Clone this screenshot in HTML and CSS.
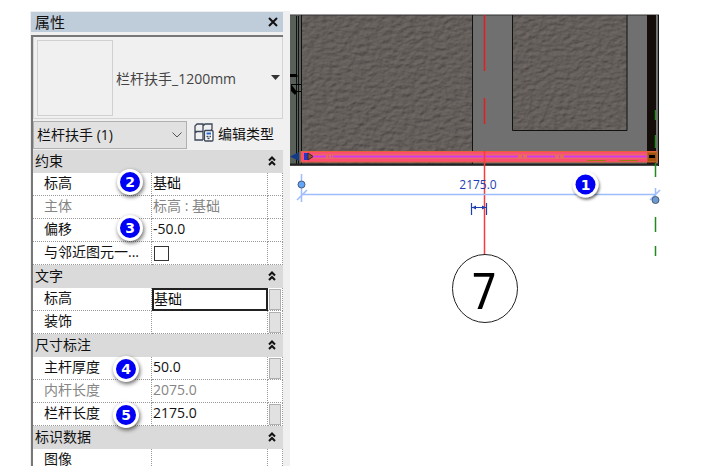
FILE: index.html
```html
<!DOCTYPE html>
<html lang="zh-CN">
<head>
  <meta charset="UTF-8">
  <title>属性</title>
  <link rel="stylesheet" href="styles.css">
</head>
<body>
  <div class="workspace">

    <!-- Properties palette -->
    <aside class="palette">
      <header class="palette-title">
        <h2>属性</h2>
        <button class="close" aria-label="关闭">
          <svg width="10" height="10" viewBox="0 0 10 10"><path d="M1 1 L9 9 M9 1 L1 9" stroke="#111" stroke-width="2"/></svg>
        </button>
      </header>

      <div class="palette-body">
        <button class="type-selector">
          <span class="thumb"></span>
          <span class="type-name">栏杆扶手_1200mm</span>
          <svg class="caret" width="9" height="5" viewBox="0 0 9 5"><path d="M0 0 H9 L4.5 5 Z" fill="#333"/></svg>
        </button>

        <div class="filter-row">
          <select class="filter" aria-label="图元">
            <option>栏杆扶手 (1)</option>
          </select>
          <button class="edit-type">
            <svg width="20" height="19" viewBox="0 0 20 19" fill="none" stroke="#3b4658" stroke-width="1.3">
              <path d="M3 1 H9 V8.500 H1 V3 Z M9 3 L11 1 H18 V6 L17 7.500 M1 8.500 V17 H9 M9 8.500 V17 M1 10 L3 8.500"/>
              <rect x="10.500" y="7.500" width="8.500" height="10.500" rx="1" fill="#fff"/>
              <path d="M12.500 10.500 H17" stroke="#1f63d0" stroke-width="2"/>
              <path d="M12.500 13.500 H17 M13.500 15.500 H16" stroke-dasharray="2 1"/>
            </svg>
            编辑类型
          </button>
        </div>

        <table class="props">
          <colgroup><col class="col-name"><col><col class="col-btn"></colgroup>
          <tbody>
            <tr class="group"><th colspan="3">约束<button class="fold" aria-label="折叠"><svg width="8" height="10" viewBox="0 0 8 10"><path d="M1 4.500 L4 1.500 L7 4.500 M1 9 L4 6 L7 9"/></svg></button></th></tr>
            <tr><th>标高<span class="badge">2</span></th><td>基础</td><td></td></tr>
            <tr class="readonly"><th>主体</th><td>标高 : 基础</td><td></td></tr>
            <tr><th>偏移<span class="badge">3</span></th><td>-50.0</td><td></td></tr>
            <tr><th><label for="attach">与邻近图元一...</label></th><td><input type="checkbox" id="attach"></td><td></td></tr>
          </tbody>
          <tbody>
            <tr class="group"><th colspan="3">文字<button class="fold" aria-label="折叠"><svg width="8" height="10" viewBox="0 0 8 10"><path d="M1 4.500 L4 1.500 L7 4.500 M1 9 L4 6 L7 9"/></svg></button></th></tr>
            <tr><th><label for="level">标高</label></th><td class="editing"><input type="text" id="level" value="基础"></td><td><button class="assoc" aria-label="关联"></button></td></tr>
            <tr><th>装饰</th><td></td><td><button class="assoc" aria-label="关联"></button></td></tr>
          </tbody>
          <tbody class="dims">
            <tr class="group"><th colspan="3">尺寸标注<button class="fold" aria-label="折叠"><svg width="8" height="10" viewBox="0 0 8 10"><path d="M1 4.500 L4 1.500 L7 4.500 M1 9 L4 6 L7 9"/></svg></button></th></tr>
            <tr><th>主杆厚度<span class="badge">4</span></th><td>50.0</td><td><button class="assoc" aria-label="关联"></button></td></tr>
            <tr class="readonly"><th>内杆长度</th><td>2075.0</td><td></td></tr>
            <tr><th>栏杆长度<span class="badge">5</span></th><td>2175.0</td><td><button class="assoc" aria-label="关联"></button></td></tr>
          </tbody>
          <tbody>
            <tr class="group"><th colspan="3">标识数据<button class="fold" aria-label="折叠"><svg width="8" height="10" viewBox="0 0 8 10"><path d="M1 4.500 L4 1.500 L7 4.500 M1 9 L4 6 L7 9"/></svg></button></th></tr>
            <tr><th>图像</th><td></td><td></td></tr>
          </tbody>
        </table>
      </div>
    </aside>

    <!-- Plan view -->
    <main class="view">
      <svg class="plan" viewBox="290 11 423 454">
        <defs>
          <filter id="leather" x="0" y="0" width="100%" height="100%" color-interpolation-filters="sRGB">
            <feTurbulence type="fractalNoise" baseFrequency="0.16 0.24" numOctaves="4" seed="7" result="noise"/>
            <feDiffuseLighting in="noise" surfaceScale="0.9" diffuseConstant="1.1" lighting-color="#67615e">
              <feDistantLight azimuth="235" elevation="62"/>
            </feDiffuseLighting>
          </filter>
          <filter id="shadow" x="-30%" y="-30%" width="170%" height="170%">
            <feDropShadow dx="1" dy="2" stdDeviation="1.5" flood-color="#000" flood-opacity="0.6"/>
          </filter>
        </defs>

        <!-- slab and floor finish -->
        <rect x="290" y="15" width="369" height="151" fill="#707070"/>
        <rect x="302" y="15" width="171" height="150" filter="url(#leather)"/>
        <rect x="513" y="15" width="114" height="116" filter="url(#leather)"/>
        <path d="M290 15 H659" stroke="#333" fill="none"/>
        <path d="M472.500 15 V165 M512.500 15 V130.500 H627 V15" stroke="#111" fill="none"/>

        <!-- left wall -->
        <rect x="290" y="16" width="11" height="149" fill="#59605a"/>
        <path d="M296.500 16 V165 M298.500 16 V165 M301.500 15 V165" stroke="#111" fill="none"/>
        <path d="M290 76 H298 M291 84.500 H301 M296 91.500 H301" stroke="#000" fill="none"/>
        <path d="M291 84 L297 92 L295 95 L291 91 Z M290 74 H297 V77 H290 Z"/>

        <!-- right wall -->
        <rect x="647" y="15" width="9" height="150" fill="#150d09"/>
        <path d="M656.500 15 V165" stroke="#777"/>
        <path d="M658.500 15 V166" stroke="#111"/>
        <path d="M290 164.500 H659" stroke="#222" stroke-width="2"/>

        <!-- grid line 7 -->
        <path d="M484.500 15 V71 M484.500 98 V124" stroke="#e11f1f" stroke-width="1.500"/>

        <!-- selected railing -->
        <rect x="301" y="151.500" width="356" height="10.500" fill="#fc4d72" stroke="#e2603a"/>
        <path d="M313 156.500 H647" stroke="#ea6a60" stroke-width="5"/>
        <path d="M313 156.500 H326 M333 156.500 H518 M527 156.500 H555 M564 156.500 H647" stroke="#d63af0" stroke-width="2"/>
        <path d="M328 156.500 H329 M331 156.500 H332 M522 156.500 H523 M559 156.500 H560" stroke="#d63af0" stroke-width="2"/>
        <path d="M587 160.500 H657" stroke="#9b7a12" stroke-dasharray="19 13"/>
        <path d="M290 156.500 L299 152 V161 Z" fill="#123a86"/>
        <rect x="304" y="153" width="4" height="7" fill="#2a35c8"/>
        <path d="M308 153 L313 156.500 L308 160 Z" fill="#a0522d" stroke="#3a2a20"/>
        <rect x="647.500" y="152.500" width="9" height="9" fill="#a4520f" stroke="#b5651d"/>
        <rect x="649" y="155" width="6" height="3"/>

        <path d="M484.500 151 V255" stroke="#fb3b3b" stroke-width="1.500"/>

        <!-- reference plane -->
        <path d="M655.500 110 V120 M655.500 135 V148 M655.500 163 V177 M655.500 217 V232 M655.500 246 V256" stroke="#1f8a1f" stroke-width="1.500"/>

        <!-- temporary dimension -->
        <path d="M302 194.500 H656 M301.500 174 V202 M297 200 L307 190 M650 200 L660 190 M655.500 188 V202" stroke="#9dbdfc" stroke-width="1.500" fill="none"/>
        <circle cx="301.500" cy="184.500" r="3.500" fill="#62a5fa" stroke="#4a5c78"/>
        <circle cx="655.500" cy="200" r="3.500" fill="#6b9bd0" stroke="#4a5c78"/>
        <text class="dim-text" x="478" y="189" text-anchor="middle">2175.0</text>
        <path d="M471.500 203 V215 M486.500 203 V215 M472 207.500 H486" stroke="#1c3fb4" stroke-width="1.200"/>
        <path d="M472 207.500 L476 205.500 V209.500 Z M486 207.500 L482 205.500 V209.500 Z" fill="#1c3fb4"/>

        <!-- grid bubble -->
        <ellipse cx="485" cy="288.500" rx="32.500" ry="34" fill="none" stroke="#222"/>
        <text class="grid-text" x="484" y="309" text-anchor="middle">7</text>

        <g class="marker">
          <circle cx="585.500" cy="184.500" r="13" fill="#fff" filter="url(#shadow)"/>
          <circle cx="585.500" cy="184.500" r="10" fill="#0000f5"/>
          <text class="marker-text" x="585.500" y="190" text-anchor="middle">1</text>
        </g>
      </svg>
    </main>

  </div>
</body>
</html>
```
FILE: styles.css
```css
* {
  box-sizing: border-box;
}

body {
  margin: 0;
  background: #fff;
  color: #111;
  font-family: "Open Sans", "Noto Sans CJK SC", sans-serif;
  font-size: 14px;
}

button, input, select {
  font: inherit;
  color: inherit;
}

button {
  padding: 0;
  border: none;
  background: none;
  cursor: pointer;
}

.workspace {
  display: flex;
  height: 100vh;
  padding: 11px 0 9px 30px;
}

/* palette */
.palette {
  flex: 0 0 260px;
  padding: 1px 7px 0 1px;
  background: #f0f0f0;
  overflow: hidden;
}

.palette-title {
  display: flex;
  align-items: center;
  justify-content: space-between;
  height: 20px;
  padding: 0 5px 0 4px;
  background: #bfcddb;
}

.palette-title h2 {
  margin: 0;
  font-size: 15px;
  font-weight: normal;
  line-height: 20px;
}

.close {
  display: flex;
}

.palette-body {
  margin-top: 3px;
  border-top: 2px solid #777;
  border-left: 2px solid #777;
}

.type-selector {
  display: flex;
  align-items: center;
  width: 100%;
  height: 82px;
  padding: 3px 2px 3px 3px;
  border: 1px solid #d4d4d4;
  border-top: none;
  text-align: left;
  color: #444;
}

.thumb {
  width: 76px;
  height: 76px;
  border: 1px solid #d0d0d0;
}

.type-name {
  flex: 1;
  padding-left: 3px;
}

.filter-row {
  display: flex;
  align-items: center;
  gap: 7px;
  height: 31px;
}

.filter {
  width: 154px;
  height: 28px;
  padding: 0 22px 0 3px;
  border: 1px solid #b0b0b0;
  border-radius: 0;
  appearance: none;
  background: #e1e1e1 url("data:image/svg+xml,%3Csvg xmlns='http://www.w3.org/2000/svg' width='10' height='6'%3E%3Cpath d='M.5 .5 L5 5 L9.500 .5' fill='none' stroke='%23555'/%3E%3C/svg%3E") no-repeat right 4px center;
}

.edit-type {
  display: flex;
  align-items: center;
  gap: 4px;
  padding-bottom: 4px;
}

/* property grid */
.props {
  width: 100%;
  table-layout: fixed;
  border-collapse: separate;
  border-spacing: 0;
  background: #fff;
}

.col-name {
  width: 119px;
}

.col-btn {
  width: 15px;
}

.props tr {
  height: 23px;
}

.props th, .props td {
  position: relative;
  height: 23px;
  padding: 0 1px 2px;
  border-bottom: 1px dotted #999;
  border-right: 1px dotted #999;
  font-weight: normal;
  line-height: 20px;
  text-align: left;
  white-space: nowrap;
}

.props th {
  padding-left: 11px;
}

.props .group th {
  padding-left: 2px;
  border: none;
  background: #dadada;
}

.props .readonly th, .props .readonly td {
  color: #858585;
}

.fold {
  float: right;
  padding: 0 6px 0 4px;
}

.fold path {
  fill: none;
  stroke: #111;
  stroke-width: 2;
}

.props input[type="checkbox"] {
  display: block;
  width: 15px;
  height: 15px;
  margin: 2px 1px 0;
  appearance: none;
  border: 1px solid #333;
}

.props .editing {
  padding: 0;
  border: 2px solid #222;
}

.editing input {
  display: block;
  width: 100%;
  height: 19px;
  padding: 0 0 2px;
  border: none;
  outline: none;
  background: none;
}

.assoc {
  position: absolute;
  inset: 1px 1px 0 1px;
  border: 1px solid #b0b0b0;
  background: #e1e1e1;
}

/* numbered callouts */
.badge {
  position: absolute;
  z-index: 1;
  top: -4px;
  right: 8px;
  width: 26px;
  height: 26px;
  border: 3px solid #fff;
  border-radius: 50%;
  background: #0000f5;
  box-shadow: 1px 2px 4px rgba(0,0,0,0.6);
  color: #fff;
  font-family: "DejaVu Sans", sans-serif;
  font-size: 14px;
  font-weight: bold;
  line-height: 20px;
  text-align: center;
}

.dims .badge {
  top: -1px;
  right: 12px;
}

/* plan view */
.view {
  flex: 1;
  min-width: 0;
}

.plan {
  display: block;
  width: 100%;
}

.dim-text {
  font-size: 12px;
  fill: #1c3fb4;
}

.grid-text {
  font-family: "Liberation Sans Narrow", "Roboto Condensed", "Roboto", sans-serif;
  font-size: 50px;
}

.marker-text {
  font-family: "DejaVu Sans", sans-serif;
  font-size: 14px;
  font-weight: bold;
  fill: #fff;
}
```
